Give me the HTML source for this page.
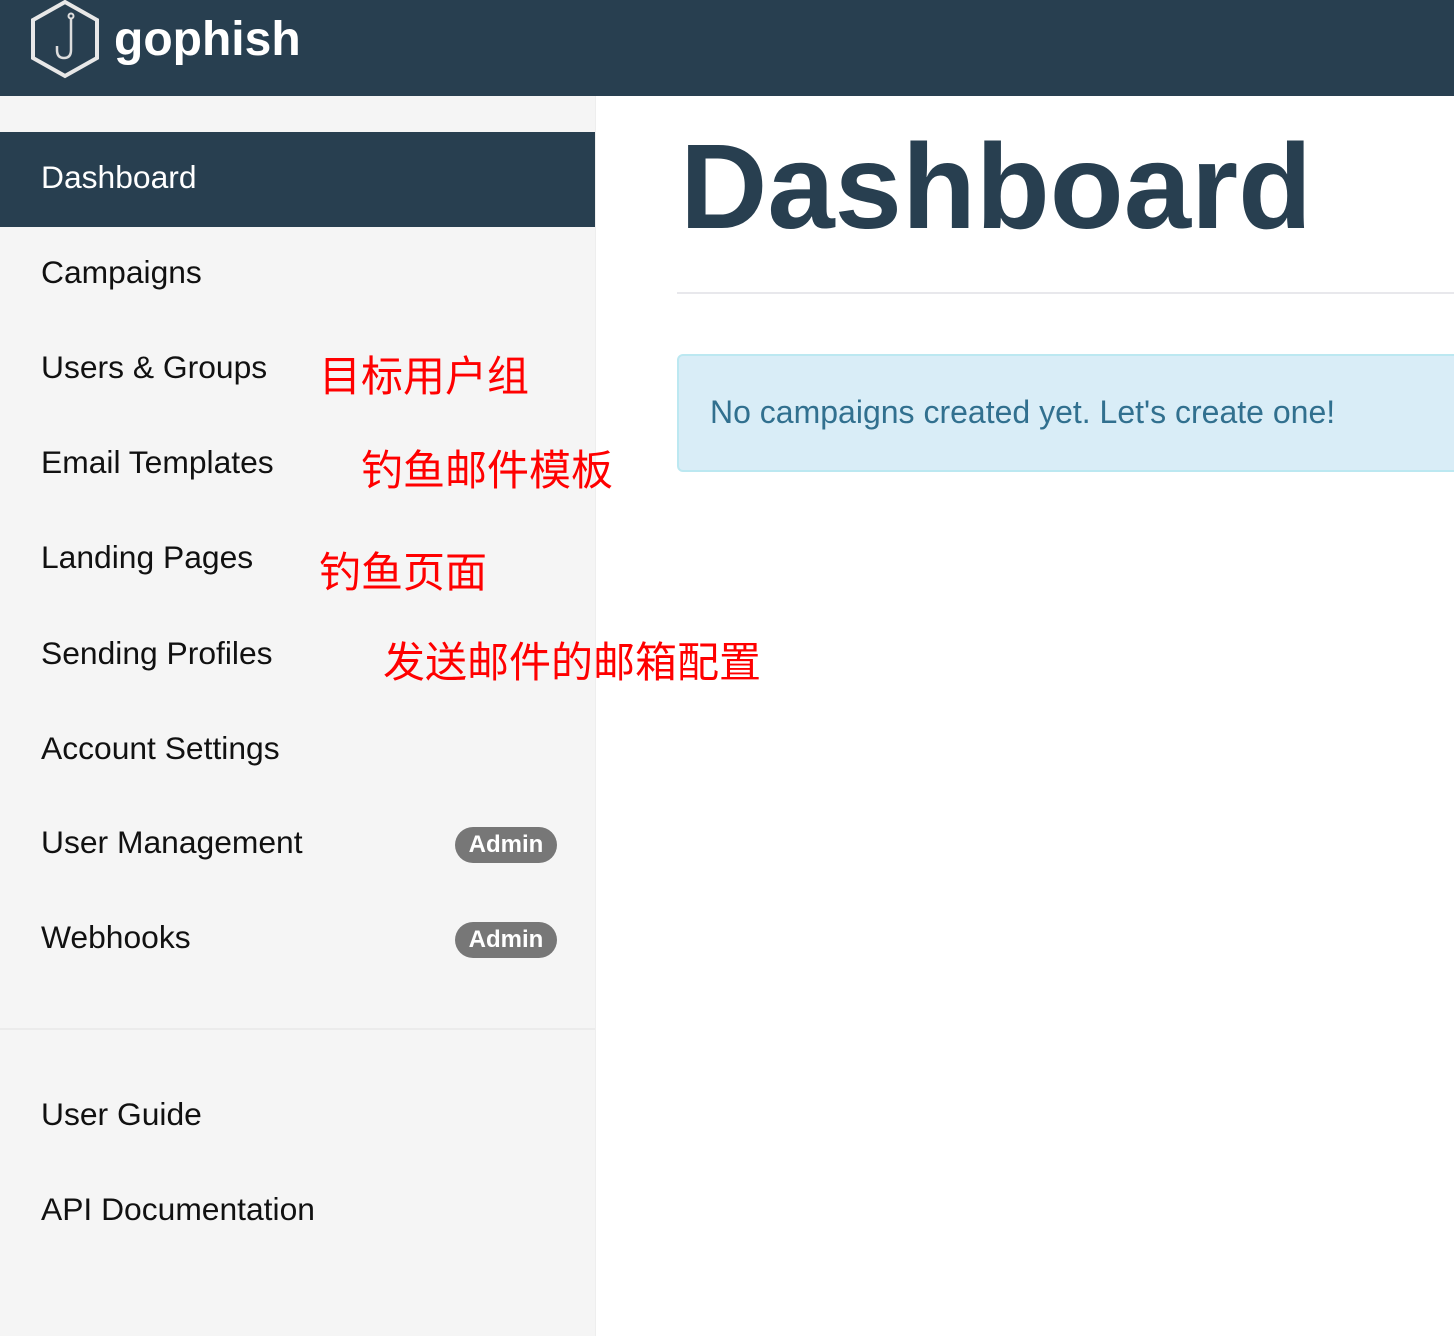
<!DOCTYPE html>
<html><head><meta charset="utf-8"><style>
*{margin:0;padding:0;box-sizing:border-box}
body{width:1454px;height:1336px;position:relative;overflow:hidden;background:#fff;font-family:"Liberation Sans","Noto Sans CJK SC",sans-serif}
.hdr{position:absolute;left:0;top:0;width:1454px;height:96px;background:#283f50}
.logo{position:absolute;left:114px;top:12px;color:#fff;font-weight:bold;font-size:48px}
.side{position:absolute;left:0;top:96px;width:596px;height:1240px;background:#f5f5f5;border-right:1px solid #eee}
.it{position:absolute;left:0;width:595px;height:95px;font-size:31.8px;color:#111;padding-left:41px;line-height:95px}
.act{background:#283f50;color:#fff;line-height:90px}
.badge{position:absolute;left:455px;top:32px;width:102px;height:36px;border-radius:18px;background:#777;color:#fff;font-weight:bold;font-size:24px;text-align:center;line-height:36px}
.red{position:absolute;color:#f00;font-size:42px;font-family:"Noto Sans CJK SC",sans-serif;line-height:1}
h1{position:absolute;left:680px;top:116px;font-size:121px;color:#283f50;font-weight:bold;line-height:140px}
.hr{position:absolute;left:677px;top:292px;width:777px;height:2px;background:#e8e8ec}
.alert{position:absolute;left:677px;top:354px;width:790px;height:118px;background:#d9edf7;border:2px solid #bce8f1;border-radius:6px;color:#31708f;font-size:32px;padding-left:31px;line-height:112px}
</style></head><body>
<div class="hdr">
<svg style="position:absolute;left:30px;top:0" width="70" height="80" viewBox="0 0 70 80"><polygon points="35,2 67,20 67,58 35,76 3,58 3,20" fill="none" stroke="#e8e8e8" stroke-width="4"/><path d="M41 18 V50 Q41 58 34 58 Q27 58 27 50 V46" fill="none" stroke="#ddd" stroke-width="2.5"/><circle cx="41" cy="16" r="2.5" fill="none" stroke="#ddd" stroke-width="2"/></svg>
<div class="logo">gophish</div>
</div>
<div class="side">
<div class="it act" style="top:36px">Dashboard</div>
<div class="it" style="top:129px">Campaigns</div>
<div class="it" style="top:224px">Users &amp; Groups</div>
<div class="it" style="top:319px">Email Templates</div>
<div class="it" style="top:414px">Landing Pages</div>
<div class="it" style="top:510px">Sending Profiles</div>
<div class="it" style="top:605px">Account Settings</div>
<div class="it" style="top:699px">User Management<div class="badge">Admin</div></div>
<div class="it" style="top:794px">Webhooks<div class="badge">Admin</div></div>
<div style="position:absolute;left:0;top:932px;width:595px;height:2px;background:#ebebeb"></div>
<div class="it" style="top:971px">User Guide</div>
<div class="it" style="top:1066px">API Documentation</div>
</div>
<div class="red" style="left:319px;top:353px">目标用户组</div>
<div class="red" style="left:361px;top:447px">钓鱼邮件模板</div>
<div class="red" style="left:319px;top:549px">钓鱼页面</div>
<div class="red" style="left:383px;top:639px">发送邮件的邮箱配置</div>
<h1>Dashboard</h1>
<div class="hr"></div>
<div class="alert">No campaigns created yet. Let's create one!</div>
</body></html>
